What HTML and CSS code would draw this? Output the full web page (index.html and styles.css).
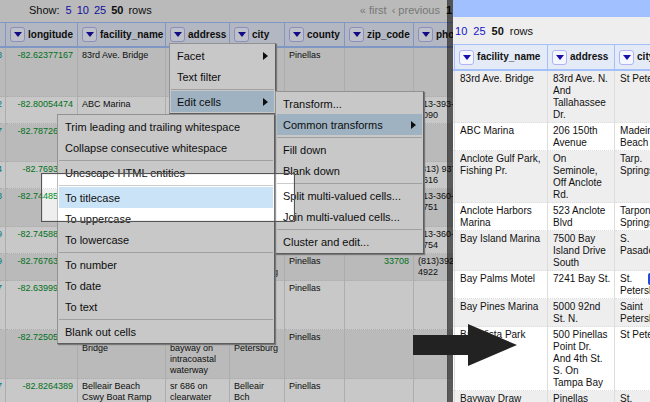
FILE: index.html
```html
<!DOCTYPE html>
<html lang="en">
<head>
<meta charset="utf-8">
<title>Common transforms: To titlecase</title>
<link rel="stylesheet" href="styles.css">
</head>
<body>
<main class="compare">
  <section class="pane before">
    <header class="bar">
      <p class="sizes"><span>Show:</span> <a href="#5">5</a> <a href="#10">10</a> <a href="#25">25</a> <b>50</b> <span>rows</span></p>
      <p class="pager"><span>« first</span> <span>‹ previous</span> <b>1</b></p>
    </header>
    <table class="grid">
      <colgroup><col class="c-lat"><col class="c-lon"><col class="c-name"><col class="c-addr"><col class="c-city"><col class="c-county"><col class="c-zip"><col class="c-phone"></colgroup>
      <thead>
        <tr>
          <th></th>
          <th><div class="head"><button class="drop" aria-label="longitude menu"></button>longitude</div></th>
          <th><div class="head"><button class="drop" aria-label="facility_name menu"></button>facility_name</div></th>
          <th><div class="head"><button class="drop" aria-label="address menu"></button>address</div></th>
          <th><div class="head"><button class="drop" aria-label="city menu"></button>city</div></th>
          <th><div class="head"><button class="drop" aria-label="county menu"></button>county</div></th>
          <th><div class="head"><button class="drop" aria-label="zip_code menu"></button>zip_code</div></th>
          <th><div class="head"><button class="drop" aria-label="phone menu"></button>phone</div></th>
        </tr>
      </thead>
      <tbody>
        <tr class="lines4"><td class="lat">8</td><td class="num">-82.62377167</td><td>83rd Ave. Bridge</td><td></td><td></td><td>Pinellas</td><td></td><td></td></tr>
        <tr class="lines2"><td class="lat">2</td><td class="num">-82.80054474</td><td>ABC Marina</td><td></td><td></td><td></td><td></td><td>813-393-<br>8090</td></tr>
        <tr class="lines3"><td class="lat">7</td><td class="num">-82.78726120</td><td></td><td></td><td></td><td></td><td></td><td></td></tr>
        <tr class="lines2"><td class="lat">4</td><td class="num">-82.7693120</td><td></td><td></td><td></td><td></td><td></td><td>(813) 937-<br>0616</td></tr>
        <tr class="lines3"><td class="lat">8</td><td class="num">-82.74485120</td><td></td><td></td><td></td><td></td><td></td><td>813-360-<br>6751</td></tr>
        <tr class="lines2"><td class="lat">9</td><td class="num">-82.74588120</td><td></td><td></td><td></td><td></td><td></td><td>813-360-<br>6754</td></tr>
        <tr class="lines2"><td class="lat">9</td><td class="num">-82.76763120</td><td></td><td></td><td><br>Petersburg</td><td>Pinellas</td><td class="num">33708</td><td>(813)392-<br>4922</td></tr>
        <tr class="lines4"><td class="lat">7</td><td class="num">-82.63999120</td><td></td><td></td><td></td><td>Pinellas</td><td></td><td></td></tr>
        <tr class="lines4"><td class="lat"></td><td class="num">-82.72505120</td><td><br>Bridge</td><td><br>bayway on intracoastal waterway</td><td><br>Petersburg</td><td>Pinellas</td><td></td><td></td></tr>
        <tr class="lines4"><td class="lat">7</td><td class="num">-82.8264389</td><td>Belleair Beach Cswy Boat Ramp</td><td>sr 686 on clearwater</td><td>Belleair<br>Bch</td><td>Pinellas</td><td></td><td></td></tr>
      </tbody>
    </table>

    <nav class="menu menu-column" aria-label="Column">
      <button class="more">Facet</button>
      <button>Text filter</button>
      <hr>
      <button class="more on">Edit cells</button>
    </nav>
    <nav class="menu menu-edit" aria-label="Edit cells">
      <button>Transform...</button>
      <button class="more on">Common transforms</button>
      <hr>
      <button>Fill down</button>
      <button>Blank down</button>
      <hr>
      <button>Split multi-valued cells...</button>
      <button>Join multi-valued cells...</button>
      <hr>
      <button>Cluster and edit...</button>
    </nav>
    <nav class="menu menu-common" aria-label="Common transforms">
      <button>Trim leading and trailing whitespace</button>
      <button>Collapse consecutive whitespace</button>
      <hr>
      <button>Unescape HTML entities</button>
      <hr>
      <button class="on">To titlecase</button>
      <button>To uppercase</button>
      <button>To lowercase</button>
      <hr>
      <button>To number</button>
      <button>To date</button>
      <button>To text</button>
      <hr>
      <button>Blank out cells</button>
    </nav>
    <div class="spotlight"></div>
  </section>

  <section class="pane after">
    <div class="strip"></div>
    <header class="bar">
      <p class="sizes"><a href="#10">10</a> <a href="#25">25</a> <b>50</b> <span>rows</span></p>
    </header>
    <table class="grid">
      <colgroup><col class="c-edge"><col class="c-name"><col class="c-addr"><col class="c-city"></colgroup>
      <thead>
        <tr>
          <th></th>
          <th><div class="head"><button class="drop" aria-label="facility_name menu"></button>facility_name</div></th>
          <th><div class="head"><button class="drop" aria-label="address menu"></button>address</div></th>
          <th><div class="head"><button class="drop" aria-label="city menu"></button>city</div></th>
        </tr>
      </thead>
      <tbody>
        <tr><td></td><td>83rd Ave. Bridge</td><td>83rd Ave. N.<br>And<br>Tallahassee<br>Dr.</td><td>St Petersburg</td></tr>
        <tr><td></td><td>ABC Marina</td><td>206 150th<br>Avenue</td><td>Madeira<br>Beach</td></tr>
        <tr><td></td><td>Anclote Gulf Park,<br>Fishing Pr.</td><td>On<br>Seminole,<br>Off Anclote<br>Rd.</td><td>Tarp.<br>Springs</td></tr>
        <tr><td></td><td>Anclote Harbors<br>Marina</td><td>523 Anclote<br>Blvd</td><td>Tarpon<br>Springs</td></tr>
        <tr><td></td><td>Bay Island Marina</td><td>7500 Bay<br>Island Drive<br>South</td><td>S.<br>Pasadena</td></tr>
        <tr><td></td><td>Bay Palms Motel</td><td>7241 Bay St.</td><td><div class="editable">St.<button class="edit" aria-label="edit"></button></div>Petersburg</td></tr>
        <tr><td></td><td>Bay Pines Marina</td><td>5000 92nd<br>St. N.</td><td>Saint<br>Petersburg</td></tr>
        <tr><td></td><td>Bay Vista Park</td><td>500 Pinellas<br>Point Dr.<br>And 4th St.<br>S. On<br>Tampa Bay</td><td>St Petersburg</td></tr>
        <tr><td></td><td>Bayway Draw</td><td>Pinellas</td><td>St.</td></tr>
      </tbody>
    </table>
  </section>

  <svg class="arrow" viewBox="0 0 104 44" aria-hidden="true"><path d="M0 12H55V1L104 22L55 43V32H0Z"/></svg>
</main>
</body>
</html>
```

FILE: styles.css
```css
* { box-sizing: border-box; }

body {
  margin: 0;
  font-family: "Liberation Sans", Arial, sans-serif;
  color: #111;
}

p { margin: 0; }
a { color: #1414c8; text-decoration: none; }
button { font: inherit; color: inherit; margin: 0; }

.compare {
  position: relative;
  display: grid;
  grid-template-columns: 69.7% 1fr;
  height: 100vh;
  overflow: hidden;
}

.pane {
  position: relative;
  overflow: hidden;
  background: #eee;
}

.bar {
  display: flex;
  justify-content: space-between;
  align-items: center;
  font-size: 11px;
}

.sizes, .pager { display: flex; gap: 5px; white-space: nowrap; }

.before .bar { height: 22px; padding: 0 1px 2px 29px; }
.before .sizes span:first-child { margin-right: 1px; }
.pager { color: #999; }
.pager b { color: #111; margin-left: 1px; }

.grid {
  table-layout: fixed;
  border-collapse: separate;
  border-spacing: 0;
  font-size: 10px;
  line-height: 12px;
}

th {
  height: 26px;
  padding: 0 4px;
  background: #e4eaf6;
  border: solid #a4c0fa;
  border-width: 1px 1px 2px 0;
  white-space: nowrap;
  overflow: hidden;
}

.head { display: flex; align-items: center; gap: 3px; }

.drop {
  flex: none;
  display: grid;
  place-items: center;
  width: 15px;
  height: 15px;
  padding: 0;
  border: 1px solid #b0b4f4;
  border-radius: 3px;
  background: #f4f7ff;
}

.drop::before {
  content: "";
  border: solid transparent;
  border-width: 5px 4px 0;
  border-top-color: #1a0dab;
}

td {
  padding: 2px 4px;
  vertical-align: top;
  border-right: 1px solid #ddd;
  border-bottom: 1px dotted #ddd;
}

tbody tr:nth-child(odd) { background: #eee; }
tbody tr:nth-child(even) { background: #fff; }

.before .grid { width: 480px; font-size: 9px; line-height: 11px; }
.before th { font-size: 10px; }
.before .num { text-align: right; color: #008f28; }
.before .lat { direction: rtl; padding: 2px 4px 2px 0; white-space: nowrap; overflow: hidden; color: #009a9a; }
.c-lat { width: 6px; }
.c-lon { width: 72px; }
.before .c-name { width: 88px; }
.before .c-addr { width: 64px; }
.before .c-city { width: 55px; }
.c-county { width: 60px; }
.c-zip { width: 69px; }

.lines2 { height: 27px; }
.lines3 { height: 38px; }
.lines4 { height: 49px; }

.menu {
  position: absolute;
  padding: 1px;
  background: #fff;
  border: 1px solid #bbb;
  border-right-color: #777;
  border-bottom-color: #777;
  box-shadow: 1px 1px 1px #999;
  font-size: 11px;
}

.menu-column { left: 169px; top: 43px; width: 107px; }
.menu-edit { left: 275px; top: 91px; width: 149px; }
.menu-common { left: 57px; top: 114px; width: 218px; }

.menu button {
  display: flex;
  align-items: center;
  justify-content: space-between;
  width: 100%;
  height: 21px;
  padding: 0 6px;
  border: 0;
  background: none;
  white-space: nowrap;
}

.menu .on { background: #cae3f6; }

.more::after {
  content: "";
  border: solid transparent;
  border-width: 4px 0 4px 5px;
  border-left-color: #111;
}

.menu hr {
  height: 1px;
  margin: 2px 0 1px;
  border: 0;
  background: #ccc;
}

.spotlight {
  position: absolute;
  left: 41px;
  top: 173px;
  width: 254px;
  height: 49px;
  border: 1px solid #555;
  box-shadow: inset 0 0 1px #555, 0 0 0 100vmax rgba(0, 0, 0, .216);
}

.before::after {
  content: "";
  position: absolute;
  inset: 0 0 0 auto;
  width: 5px;
  border-left: 1px solid rgba(0, 0, 0, .1);
  background: rgba(0, 0, 0, .55);
}

.strip { height: 17px; background: #a0c0ff; }
.after .bar { height: 27px; padding-left: 2px; }
.after .sizes { gap: 6px; }
.after .grid { width: 230px; }
.after th { height: 27px; }
.after td { padding: 2px 5px 1px; white-space: nowrap; }
.c-edge { width: 2px; }
.after .c-name { width: 93px; }
.after .c-addr { width: 67px; }
.after th:first-child, .after td:first-child { padding: 0; }

.editable { display: flex; gap: 16px; }
.edit {
  width: 12px;
  height: 12px;
  padding: 0;
  border: 0;
  border-radius: 2px;
  background: #1f4fe0;
}

.arrow {
  position: absolute;
  left: 413px;
  top: 323px;
  width: 104px;
  height: 44px;
  fill: #222;
}
```
